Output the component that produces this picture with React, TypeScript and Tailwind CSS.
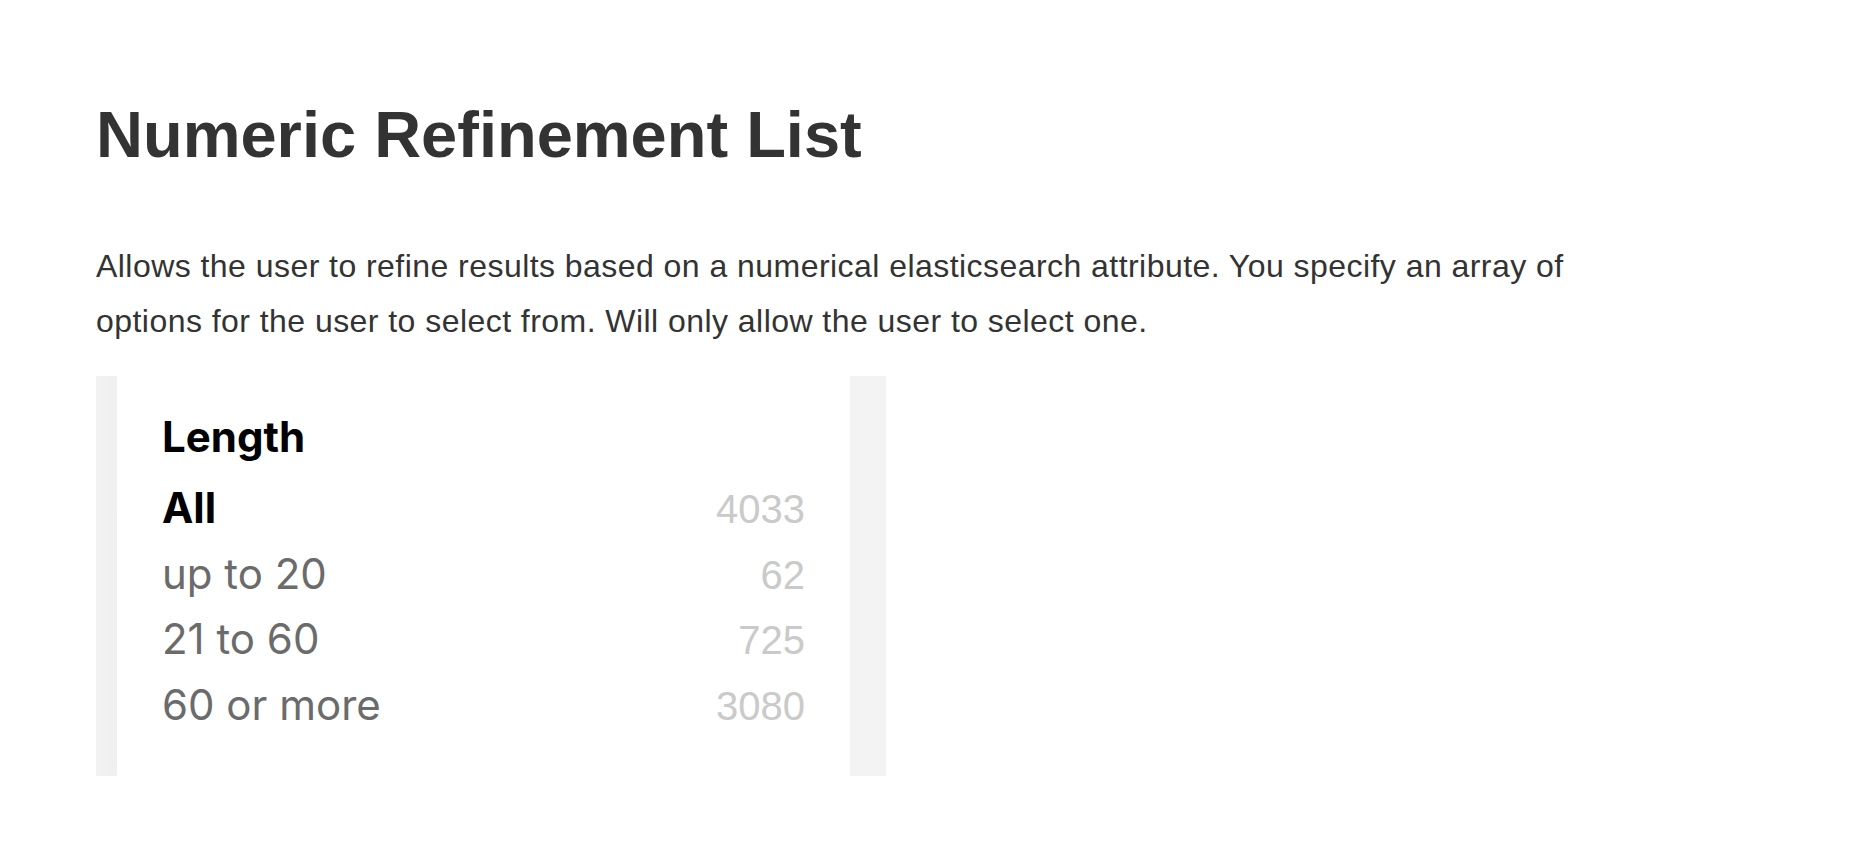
import React from "react";

const rows = [
  { label: "All", count: "4033", active: true },
  { label: "up to 20", count: "62", active: false },
  { label: "21 to 60", count: "725", active: false },
  { label: "60 or more", count: "3080", active: false },
];

export default function App() {
  return (
    <div className="min-h-screen bg-white pl-[96px] pt-[102px] font-['Liberation_Sans',Arial,sans-serif]">
      <h1 className="text-[65px] leading-[65px] font-bold text-[#333]">Numeric Refinement List</h1>
      <p className="mt-[72px] w-[1500px] text-[32px] leading-[55px] tracking-[0.45px] text-[#333]">
        Allows the user to refine results based on a numerical elasticsearch attribute. You specify an array of options for the user to select from. Will only allow the user to select one.
      </p>
      <div className="mt-[27px] flex h-[400px] w-[790px]">
        <div className="w-[21px] bg-gradient-to-r from-[#f3f3f3] to-[#efefef]" />
        <div className="flex-1 bg-white pl-[45px] pr-[45px] pt-[28px] font-['Inter',sans-serif]">
          <div className="h-[65.5px] text-[42px] leading-[65.5px] font-bold text-black">Length</div>
          <div className="mt-[5.5px]">
            {rows.map((r) => (
              <div key={r.label} className="flex h-[65.5px] items-baseline justify-between overflow-hidden leading-[65.5px]">
                <span className={r.active ? "text-[42px] font-bold text-black" : "text-[42px] text-[#6b6b6b]"}>{r.label}</span>
                <span className="font-['Liberation_Sans',Arial,sans-serif] text-[40px] text-[#cacaca]">{r.count}</span>
              </div>
            ))}
          </div>
        </div>
        <div className="w-[36px] bg-[#f3f3f3]" />
      </div>
    </div>
  );
}
